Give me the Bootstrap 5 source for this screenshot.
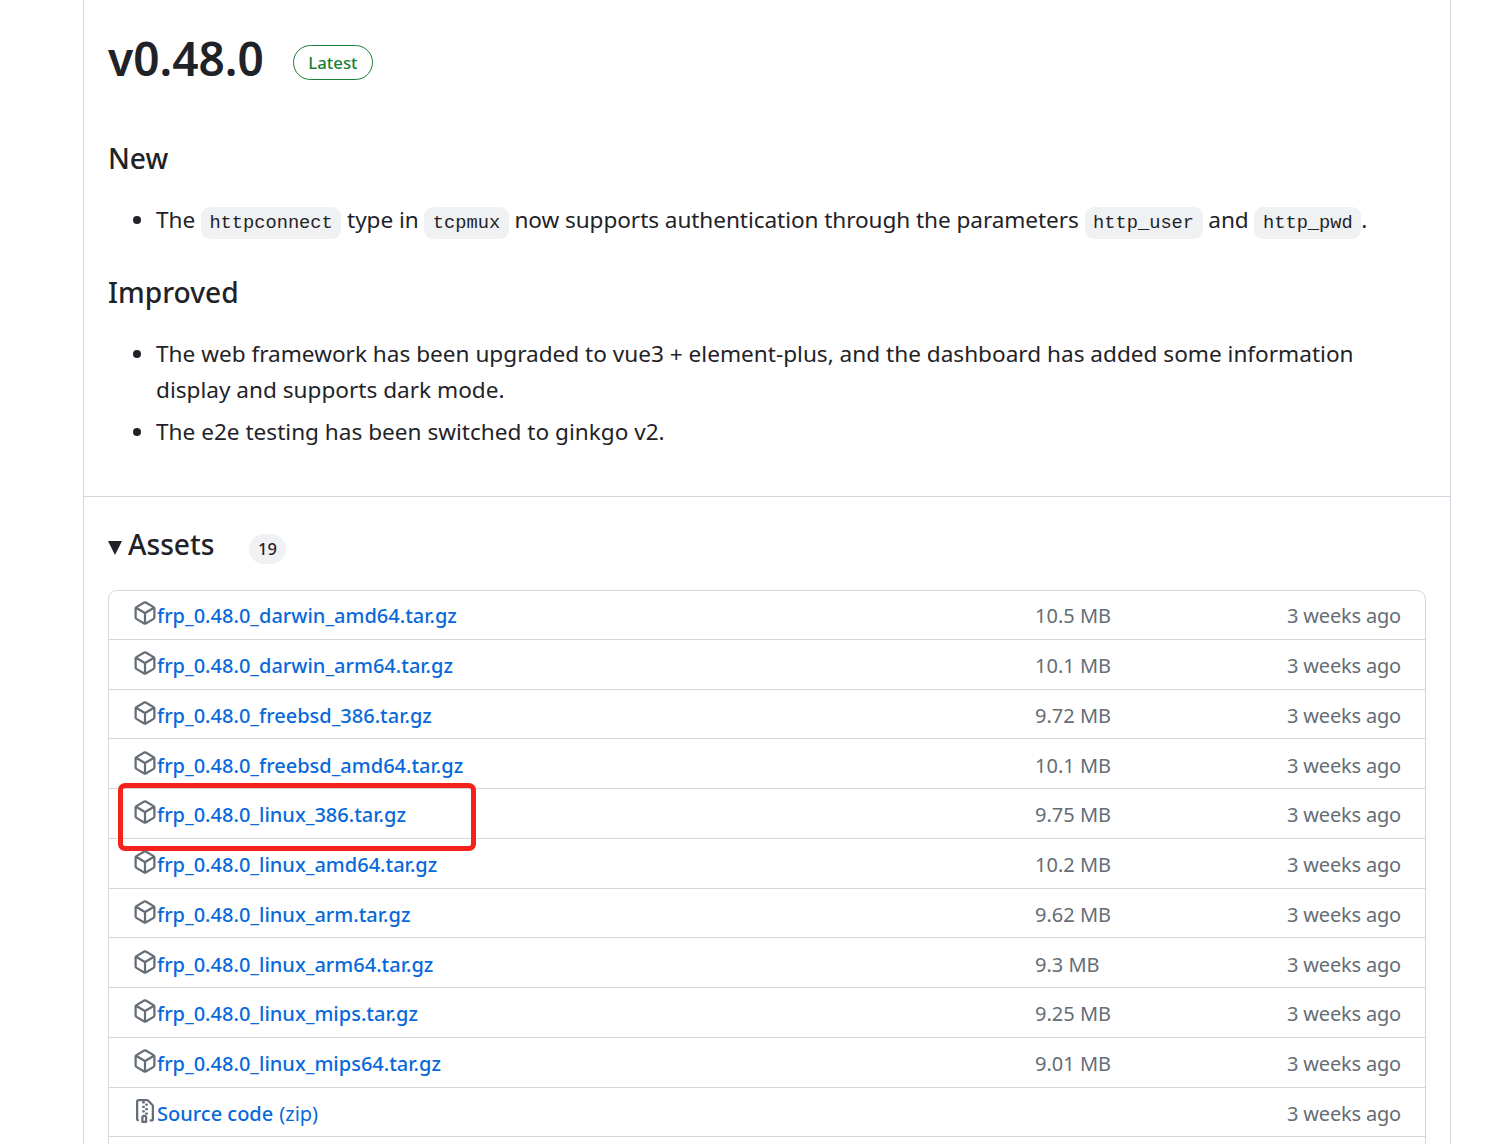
<!DOCTYPE html>
<html lang="en">
<head>
  <meta charset="UTF-8">
  <meta name="viewport" content="width=device-width, initial-scale=1.0">
  <title>frp v0.48.0</title>
  <link href="https://cdn.jsdelivr.net/npm/bootstrap@5.3.0/dist/css/bootstrap.min.css" rel="stylesheet">
  <style>
    html, body { height: 1144px; overflow: hidden; }
    body {
      font-family: "Noto Sans", "Open Sans", sans-serif;
      font-size: 22.6px;
      line-height: 36px;
      color: #1f2328;
      background: #fff;
    }
    .release-box {
      margin-left: 83px;
      width: 1368px;
      border-left: 1.5px solid #d0d7de;
      border-right: 1.5px solid #d0d7de;
    }
    .release-body {
      padding: 0 24px 24px;
      height: 497px;
      border-bottom: 1.5px solid #d0d7de;
    }
    .release-title {
      font-size: 46px;
      line-height: 60px;
      font-weight: 600;
      margin: 0;
      padding-top: 28px;
    }
    .latest-pill {
      font-size: 16.8px;
      line-height: 33px;
      font-weight: 500;
      color: #1a7f37;
      border: 1.5px solid #1a7f37;
      border-radius: 30px;
      padding: 0 14.5px;
      margin-left: 29px;
      margin-top: 45px;
    }
    .section-head {
      font-size: 28.2px;
      line-height: 38px;
      font-weight: 500;
      margin: 51px 0 0;
    }
    .section-head.next-head { margin-top: 32px; }
    .note-list { margin: 24.5px 0 0; padding-left: 48px; }
    .note-list.tight-list { letter-spacing: -0.07px; }
    .note-list.next-list { margin-top: 25.5px; }
    .note-list li { margin-top: 6px; }
    .note-list li:first-child { margin-top: 0; }
    .code-chip {
      font-family: "Liberation Mono", monospace;
      font-size: 18.7px;
      letter-spacing: 0;
      color: #1f2328;
      background: #eff1f3;
      border-radius: 9px;
      padding: 5px 8.5px;
    }
    .assets-area { padding: 23px 24px 0; }
    .assets-head { font-size: 28.2px; line-height: 48px; font-weight: 500; }
    .caret-tri {
      width: 0; height: 0;
      border-left: 7px solid transparent;
      border-right: 7px solid transparent;
      border-top: 14px solid #1f2328;
      margin-right: 6px;
      margin-top: 8px;
    }
    .count-pill {
      font-size: 16.5px;
      line-height: 30px;
      font-weight: 500;
      background: #eff1f3;
      border-radius: 30px;
      padding: 0 9.5px;
      margin-left: 34px;
      margin-top: 10px;
    }
    .asset-list {
      margin-top: 22px;
      border: 1.5px solid #d0d7de;
      border-bottom: 0;
      border-radius: 9px 9px 0 0;
    }
    .asset-row {
      position: relative;
      height: 49.75px;
      padding: 4px 24px 0;
      font-size: 20px;
      border-bottom: 1.5px solid #d0d7de;
    }
    .asset-row:first-child { height: 48.75px; padding-top: 2px; }
    .asset-name { width: 902px; color: #0969da; font-weight: 500; }
    .asset-name svg { width: 24px; height: 24px; fill: #656d76; margin-top: -6px; flex: none; }
    .asset-name span { color: #0969da; }
    .zip-tag { font-weight: 400; margin-left: 6px; }
    .asset-size { color: #656d76; }
    .asset-date { color: #656d76; margin-left: auto; letter-spacing: -0.18px; }
    .red-mark {
      position: absolute;
      left: 9px;
      top: -6px;
      width: 358px;
      height: 68px;
      border: 5px solid #f5221b;
      border-radius: 7px;
    }
  </style>
</head>
<body>
  <div class="release-box">
    <div class="release-body">
      <div class="d-flex align-items-start">
        <h1 class="release-title">v0.48.0</h1>
        <div class="latest-pill">Latest</div>
      </div>
      <h2 class="section-head">New</h2>
      <ul class="note-list tight-list">
        <li>The <code class="code-chip">httpconnect</code> type in <code class="code-chip">tcpmux</code> now supports authentication through the parameters <code class="code-chip">http_user</code> and <code class="code-chip">http_pwd</code>.</li>
      </ul>
      <h2 class="section-head next-head">Improved</h2>
      <ul class="note-list next-list">
        <li>The web framework has been upgraded to vue3 + element-plus, and the dashboard has added some information display and supports dark mode.</li>
        <li>The e2e testing has been switched to ginkgo v2.</li>
      </ul>
    </div>
    <div class="assets-area">
      <div class="d-flex align-items-center assets-head">
        <span class="caret-tri"></span>Assets<span class="count-pill">19</span>
      </div>
      <div class="asset-list" id="asset-list"></div>
    </div>
  </div>

  <script>
    const pkgIcon = '<svg viewBox="0 0 16 16"><path d="m8.878.392 5.25 3.045c.54.314.872.89.872 1.514v6.098a1.75 1.75 0 0 1-.872 1.514l-5.25 3.045a1.75 1.75 0 0 1-1.756 0l-5.25-3.045A1.75 1.75 0 0 1 1 11.049V4.951c0-.624.332-1.201.872-1.514L7.122.392a1.75 1.75 0 0 1 1.756 0ZM7.875 1.69l-4.63 2.685L8 7.133l4.755-2.758-4.63-2.685a.248.248 0 0 0-.25 0ZM2.5 5.677v5.372c0 .09.047.171.125.216l4.625 2.683V8.432Zm6.25 8.271 4.625-2.683a.25.25 0 0 0 .125-.216V5.677L8.75 8.432Z"></path></svg>';
    const zipIcon = '<svg viewBox="0 0 16 16"><path d="M3.5 1.75v11.5c0 .09.048.173.126.217a.75.75 0 0 1-.752 1.298A1.748 1.748 0 0 1 2 13.25V1.75C2 .784 2.784 0 3.75 0h5.586c.464 0 .909.185 1.237.513l2.914 2.914c.329.328.513.773.513 1.237v8.586A1.75 1.75 0 0 1 12.25 15h-.5a.75.75 0 0 1 0-1.5h.5a.25.25 0 0 0 .25-.25V4.664a.25.25 0 0 0-.073-.177L9.513 1.573a.25.25 0 0 0-.177-.073H7.25a.75.75 0 0 1 0 1.5h-.5a.75.75 0 0 1 0-1.5h-3a.25.25 0 0 0-.25.25Zm3.75 8.75h.5c.966 0 1.75.784 1.75 1.75v3a.75.75 0 0 1-.75.75h-2.5a.75.75 0 0 1-.75-.75v-3c0-.966.784-1.75 1.75-1.75ZM6 5.25a.75.75 0 0 1 .75-.75h.5a.75.75 0 0 1 0 1.5h-.5A.75.75 0 0 1 6 5.25Zm.75 2.25h.5a.75.75 0 0 1 0 1.5h-.5a.75.75 0 0 1 0-1.5ZM8 6.75A.75.75 0 0 1 8.75 6h.5a.75.75 0 0 1 0 1.5h-.5A.75.75 0 0 1 8 6.75ZM8.75 3h.5a.75.75 0 0 1 0 1.5h-.5a.75.75 0 0 1 0-1.5ZM8 9.75A.75.75 0 0 1 8.75 9h.5a.75.75 0 0 1 0 1.5h-.5A.75.75 0 0 1 8 9.75Zm-1 2.5v2.25h1v-2.25a.25.25 0 0 0-.25-.25h-.5a.25.25 0 0 0-.25.25Z"></path></svg>';

    const assets = [
      ['frp_0.48.0_darwin_amd64.tar.gz', '10.5 MB'],
      ['frp_0.48.0_darwin_arm64.tar.gz', '10.1 MB'],
      ['frp_0.48.0_freebsd_386.tar.gz', '9.72 MB'],
      ['frp_0.48.0_freebsd_amd64.tar.gz', '10.1 MB'],
      ['frp_0.48.0_linux_386.tar.gz', '9.75 MB', true],
      ['frp_0.48.0_linux_amd64.tar.gz', '10.2 MB'],
      ['frp_0.48.0_linux_arm.tar.gz', '9.62 MB'],
      ['frp_0.48.0_linux_arm64.tar.gz', '9.3 MB'],
      ['frp_0.48.0_linux_mips.tar.gz', '9.25 MB'],
      ['frp_0.48.0_linux_mips64.tar.gz', '9.01 MB']
    ];

    let html = '';
    assets.forEach(a => {
      html += `<div class="asset-row d-flex align-items-center">
        <div class="asset-name d-flex align-items-center">${pkgIcon}<span>${a[0]}</span></div>
        <div class="asset-size">${a[1]}</div>
        <div class="asset-date">3 weeks ago</div>
        ${a[2] ? '<div class="red-mark"></div>' : ''}
      </div>`;
    });
    html += `<div class="asset-row d-flex align-items-center">
      <div class="asset-name d-flex align-items-center">${zipIcon}<span>Source code</span><span class="zip-tag">(zip)</span></div>
      <div class="asset-date">3 weeks ago</div>
    </div>`;
    // next row starts right at the bottom edge of the shot, nothing readable in it
    html += '<div class="asset-row"></div>';
    document.getElementById('asset-list').innerHTML = html;
  </script>
  <script src="https://cdn.jsdelivr.net/npm/bootstrap@5.3.0/dist/js/bootstrap.bundle.min.js"></script>
</body>
</html>
